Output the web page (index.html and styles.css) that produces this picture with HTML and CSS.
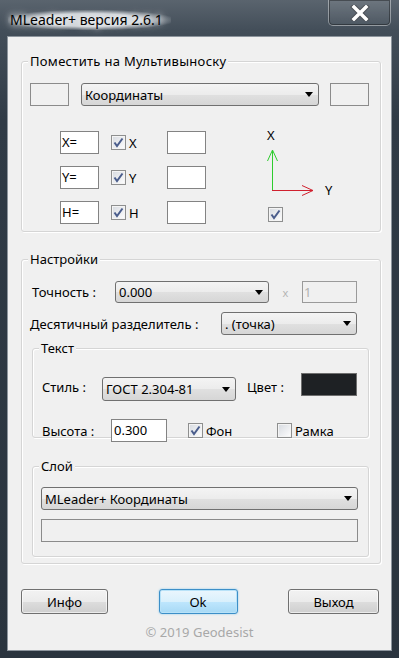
FILE: index.html
```html
<!DOCTYPE html>
<html>
<head>
  <title>MLeader+</title>
  <link rel="stylesheet" href="styles.css">
</head>
<body>

<div class="window">
  <div class="titlebar">
    <span class="title">MLeader+ версия 2.6.1</span>
    <div class="close">
      <svg width="20" height="16" viewBox="0 0 20 16">
        <path d="M4 2 L16 14 M16 2 L4 14" stroke="#4a4f55" stroke-width="5.5" stroke-linecap="square"/>
        <path d="M4 2 L16 14 M16 2 L4 14" stroke="#fff" stroke-width="3.5" stroke-linecap="square"/>
      </svg>
    </div>
  </div>

  <div class="client">
    <!-- Поместить на Мультивыноску -->
    <div class="group group-place">
      <div class="group-title">Поместить на Мультивыноску</div>
      <div class="row row-top">
        <div class="box"></div>
        <div class="combo combo-type"><span>Координаты</span><i class="arrow"></i></div>
        <div class="box"></div>
      </div>
      <div class="coords">
        <div class="coord-list">
          <div class="coord">
            <div class="edit edit-s">X=</div>
            <span class="check"><svg width="13" height="13" viewBox="0 0 13 13"><path d="M2.5 6.5 L5 10 L10.5 2.5" fill="none" stroke="#4a5d8c" stroke-width="2"/></svg></span>
            <span class="coord-name">X</span>
            <div class="edit edit-s"></div>
          </div>
          <div class="coord">
            <div class="edit edit-s">Y=</div>
            <span class="check"><svg width="13" height="13" viewBox="0 0 13 13"><path d="M2.5 6.5 L5 10 L10.5 2.5" fill="none" stroke="#4a5d8c" stroke-width="2"/></svg></span>
            <span class="coord-name">Y</span>
            <div class="edit edit-s"></div>
          </div>
          <div class="coord">
            <div class="edit edit-s">H=</div>
            <span class="check"><svg width="13" height="13" viewBox="0 0 13 13"><path d="M2.5 6.5 L5 10 L10.5 2.5" fill="none" stroke="#4a5d8c" stroke-width="2"/></svg></span>
            <span class="coord-name">H</span>
            <div class="edit edit-s"></div>
          </div>
        </div>
        <div class="axes">
          <svg width="80" height="76" viewBox="0 0 80 76">
            <text x="8" y="13" font-size="13" font-family="Noto Sans, sans-serif">X</text>
            <path d="M13.5 24 V63" stroke="#2ecc2e" stroke-width="1"/>
            <path d="M8.5 34 L13.5 23 L18.5 34" fill="none" stroke="#2ecc2e" stroke-width="1"/>
            <path d="M13 63.5 H54" stroke="#d0202e" stroke-width="1"/>
            <path d="M43 58.5 L54 63.5 L43 68.5" fill="none" stroke="#d0202e" stroke-width="1"/>
            <text x="66" y="68" font-size="13" font-family="Noto Sans, sans-serif">Y</text>
          </svg>
          <span class="check check-axes"><svg width="13" height="13" viewBox="0 0 13 13"><path d="M2.5 6.5 L5 10 L10.5 2.5" fill="none" stroke="#4a5d8c" stroke-width="2"/></svg></span>
        </div>
      </div>
    </div>

    <!-- Настройки -->
    <div class="group group-settings">
      <div class="group-title">Настройки</div>
      <div class="row row-precision">
        <span class="label label-precision">Точность :</span>
        <div class="combo combo-precision"><span>0.000</span><i class="arrow"></i></div>
        <span class="times">x</span>
        <div class="edit edit-off">1</div>
      </div>
      <div class="row row-separator">
        <span class="label label-separator">Десятичный разделитель :</span>
        <div class="combo combo-separator"><span>. (точка)</span><i class="arrow"></i></div>
      </div>

      <div class="group group-inner group-text">
        <div class="group-title">Текст</div>
        <div class="row row-style">
          <span class="label label-style">Стиль :</span>
          <div class="combo combo-style"><span>ГОСТ 2.304-81</span><i class="arrow"></i></div>
          <span class="label label-color">Цвет :</span>
          <div class="color-box"></div>
        </div>
        <div class="row row-height">
          <span class="label label-height">Высота :</span>
          <div class="edit edit-height">0.300</div>
          <label class="check-item check-bg">
            <span class="check"><svg width="13" height="13" viewBox="0 0 13 13"><path d="M2.5 6.5 L5 10 L10.5 2.5" fill="none" stroke="#4a5d8c" stroke-width="2"/></svg></span>
            Фон
          </label>
          <label class="check-item">
            <span class="check"></span>
            Рамка
          </label>
        </div>
      </div>

      <div class="group group-inner group-layer">
        <div class="group-title">Слой</div>
        <div class="combo combo-layer"><span>MLeader+ Координаты</span><i class="arrow"></i></div>
        <div class="box box-layer"></div>
      </div>
    </div>

    <div class="buttons">
      <button class="btn btn-info">Инфо</button>
      <button class="btn btn-ok">Ok</button>
      <button class="btn btn-exit">Выход</button>
    </div>
    <div class="copyright">© 2019 Geodesist</div>
  </div>
</div>

</body>
</html>
```

FILE: styles.css
```css
* {
  box-sizing: border-box;
}
body {
  margin: 0;
  font-family: "Noto Sans", sans-serif;
  font-size: 13px;
  color: #000;
}
.window {
  width: 399px;
  height: 658px;
  display: flex;
  flex-direction: column;
  background: linear-gradient(180deg, #5a646e 0, #434e59 30px, #303b46 120px, #2a343e 100%);
}
.titlebar {
  height: 37px;
  display: flex;
  justify-content: space-between;
  align-items: flex-start;
}
.title {
  margin: 10px 0 0 8px;
  font-size: 14px;
  line-height: 20px;
  padding: 0 8px 0 2px;
  background: radial-gradient(ellipse at center, rgba(222, 226, 230, 0.9) 45%, rgba(222, 226, 230, 0) 75%);
  text-shadow: 0 0 6px #fff, 0 0 10px rgba(255, 255, 255, 0.8);
}
.close {
  width: 63px;
  height: 26px;
  margin-right: 8px;
  border: 1px solid rgba(255, 255, 255, 0.35);
  border-top: none;
  border-radius: 0 0 5px 5px;
  background: linear-gradient(180deg, rgba(255, 255, 255, 0.12), rgba(255, 255, 255, 0.04));
  box-shadow: inset 0 0 0 1px rgba(0, 0, 0, 0.35);
  display: flex;
  align-items: center;
  justify-content: center;
}
.client {
  height: 613px;
  margin: 0 8px;
  background: #f0f0f0;
  box-shadow: 0 0 0 1px #8c949c;
  display: flex;
  flex-direction: column;
  padding-left: 13px;
}

/* groups */
.group {
  border: 1px solid #d5d5d5;
  border-radius: 3px;
  box-shadow: inset 1px 1px 0 #fff, 1px 1px 0 #fff;
}
.group-title {
  width: fit-content;
  margin: -9px 0 0 6px;
  padding: 0 2px;
  line-height: 16px;
  background: #f0f0f0;
}
.row {
  display: flex;
  align-items: center;
}
.label {
  flex: none;
}

.group-place {
  margin-top: 24px;
  width: 360px;
  height: 171px;
}
.group-place .group-title {
  letter-spacing: 0.3px;
}
.row-top {
  margin: 14px 0 0 8px;
}
.box {
  width: 39px;
  height: 23px;
  border: 1px solid #8b8b8b;
  background: #f0f0f0;
}
.combo-type {
  width: 238px;
  margin: 0 11px 0 12px;
}

.coords {
  display: flex;
  margin-top: 21px;
}
.coord-list {
  margin-left: 38px;
  padding-top: 4px;
  display: flex;
  flex-direction: column;
  gap: 12px;
}
.coord {
  display: flex;
  align-items: center;
}
.coord .check {
  margin-left: 12px;
}
.coord-name {
  width: 41px;
  padding-left: 3px;
}
.axes {
  margin-left: 53px;
  display: flex;
  flex-direction: column;
}
.check-axes {
  margin: 4px 0 0 9px;
}

/* edits */
.edit {
  height: 23px;
  border: 1px solid #838383;
  background: #fff;
  padding-left: 1px;
  line-height: 20px;
}
.edit-s {
  width: 39px;
}
.edit-off {
  width: 55px;
  height: 22px;
  background: #f0f0f0;
  border-color: #9a9a9a;
  color: #b0b0b0;
}
.edit-height {
  width: 56px;
  padding-left: 2px;
}

/* combobox */
.combo {
  height: 23px;
  border: 1px solid #707070;
  border-radius: 3px;
  background: linear-gradient(180deg, #f4f4f4 0, #ececec 50%, #e0e0e0 51%, #d6d6d6 100%);
  display: flex;
  align-items: center;
  justify-content: space-between;
  padding: 0 5px 0 3px;
  flex: none;
}
.arrow {
  width: 0;
  height: 0;
  border-left: 4px solid transparent;
  border-right: 4px solid transparent;
  border-top: 5px solid #000;
}

/* checkbox */
.check {
  width: 15px;
  height: 15px;
  border: 1px solid #8e8f8f;
  background: linear-gradient(135deg, #d6dae0 0, #f2f3f5 70%, #fff 100%);
  box-shadow: inset 0 0 0 1px #f4f4f4;
  display: flex;
  align-items: center;
  justify-content: center;
  flex: none;
}

/* settings */
.group-settings {
  margin-top: 27px;
  width: 360px;
  height: 305px;
}
.row-precision {
  margin: 14px 0 0 10px;
  height: 22px;
}
.label-precision {
  width: 83px;
}
.combo-precision {
  width: 154px;
  height: 22px;
}
.times {
  width: 33px;
  text-align: center;
  color: #b4b4b4;
  font-size: 11px;
}
.row-separator {
  margin: 9px 0 0 8px;
}
.label-separator {
  width: 191px;
}
.combo-separator {
  width: 136px;
}

.group-inner {
  margin-left: 10px;
  width: 337px;
}
.group-text {
  margin-top: 13px;
  height: 90px;
}
.row-style {
  margin: 17px 0 0 9px;
  height: 28px;
}
.label-style {
  width: 60px;
}
.combo-style {
  width: 134px;
  height: 24px;
  align-self: flex-end;
}
.label-color {
  width: 54px;
  margin-left: 11px;
}
.color-box {
  width: 56px;
  height: 23px;
  align-self: flex-start;
  background: #1e2124;
  border: 1px solid #6e6e6e;
}
.row-height {
  margin: 18px 0 0 9px;
}
.label-height {
  width: 69px;
}
.check-item {
  display: flex;
  align-items: center;
  gap: 3px;
}
.check-bg {
  margin-left: 21px;
  width: 89px;
}

.group-layer {
  margin-top: 28px;
  height: 91px;
}
.combo-layer {
  width: 317px;
  margin: 13px 0 0 8px;
}
.box-layer {
  width: 317px;
  height: 23px;
  margin: 9px 0 0 8px;
}

/* buttons */
.buttons {
  display: flex;
  justify-content: space-between;
  width: 358px;
  margin-top: 25px;
}
.btn {
  height: 25px;
  border: 1px solid #707070;
  border-radius: 3px;
  background: linear-gradient(180deg, #f2f2f2 0, #ebebeb 50%, #dddddd 51%, #cfcfcf 100%);
  box-shadow: inset 0 0 0 1px rgba(255, 255, 255, 0.6);
  font-family: "Noto Sans", sans-serif;
  font-size: 13px;
  color: #000;
  padding: 0;
}
.btn-info {
  width: 87px;
}
.btn-ok {
  width: 79px;
  border-color: #3c8fc8;
  background: linear-gradient(180deg, #eaf6fd 0, #d9f0fc 50%, #bee6fd 51%, #a7d9f5 100%);
  box-shadow: inset 0 0 0 1px #b8e2f8, 0 0 2px #7fc4ea;
}
.btn-exit {
  width: 91px;
}
.copyright {
  margin: 9px 0 0 -13px;
  text-align: center;
  line-height: 18px;
  color: #a8a8a8;
}
```
